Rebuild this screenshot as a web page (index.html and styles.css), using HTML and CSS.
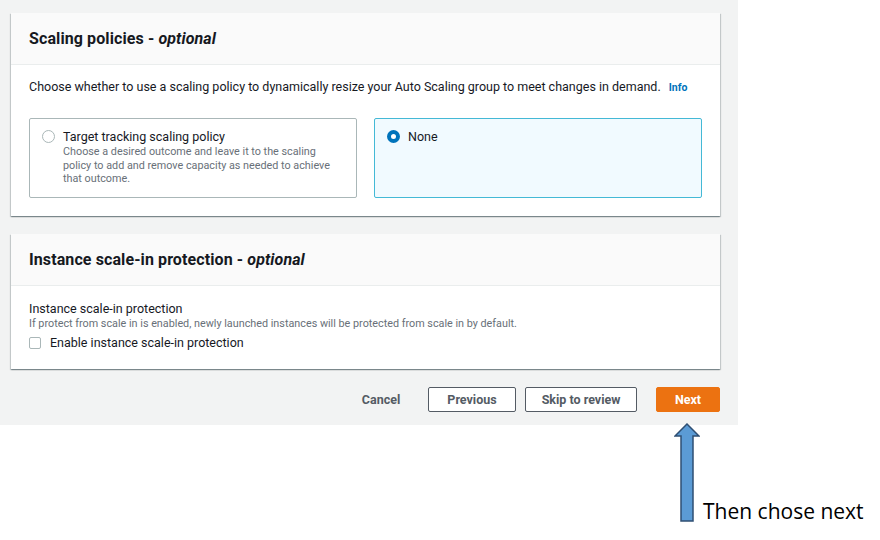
FILE: index.html
```html
<!DOCTYPE html>
<html>
<head>
<meta charset="utf-8">
<link rel="stylesheet" href="styles.css">
</head>
<body>
<div class="canvas">
  <div class="console">
    <section class="panel">
      <header class="panel-head"><h2>Scaling policies - <em>optional</em></h2></header>
      <div class="panel-body">
        <p class="lead">Choose whether to use a scaling policy to dynamically resize your Auto Scaling group to meet changes in demand. <a class="info">Info</a></p>
        <div class="tiles">
          <div class="tile">
            <span class="radio"></span>
            <div class="tile-text">
              <div class="tile-label">Target tracking scaling policy</div>
              <div class="tile-desc">Choose a desired outcome and leave it to the scaling policy to add and remove capacity as needed to achieve that outcome.</div>
            </div>
          </div>
          <div class="tile selected">
            <span class="radio on"></span>
            <div class="tile-text">
              <div class="tile-label">None</div>
            </div>
          </div>
        </div>
      </div>
    </section>
    <section class="panel second">
      <header class="panel-head"><h2>Instance scale-in protection - <em>optional</em></h2></header>
      <div class="panel-body body2">
        <div class="field-label">Instance scale-in protection</div>
        <div class="field-desc">If protect from scale in is enabled, newly launched instances will be protected from scale in by default.</div>
        <label class="check"><span class="box"></span>Enable instance scale-in protection</label>
      </div>
    </section>
    <div class="actions">
      <button class="link">Cancel</button>
      <button class="btn prev">Previous</button>
      <button class="btn skip">Skip to review</button>
      <button class="btn primary">Next</button>
    </div>
  </div>
  <div class="annot">
    <svg class="arrow" width="26" height="100" viewBox="0 0 26 100">
      <path d="M13 1 L25 13 L19 13 L19 98 L7 98 L7 13 L1 13 Z" fill="#5b9bd5" stroke="#2f4f73" stroke-width="1.5" stroke-linejoin="miter"/>
    </svg>
    <span class="note">Then chose next</span>
  </div>
</div>
</body>
</html>
```

FILE: styles.css
```css
* { box-sizing: border-box; }
html, body { margin: 0; padding: 0; background: #ffffff; }
body { width: 880px; height: 540px; overflow: hidden; font-family: Roboto, "Noto Sans", sans-serif; color: #16191f; }

.canvas { position: relative; width: 880px; height: 540px; }

.console {
  width: 738px;
  height: 425px;
  background: #f2f3f3;
  padding: 13px 18px 0 11px;
}

.panel {
  width: 709px;
  background: #ffffff;
  box-shadow: 0 1px 1px 0 rgba(0,28,36,0.3), 1px 1px 1px 0 rgba(0,28,36,0.15), -1px 1px 1px 0 rgba(0,28,36,0.15);
}
.panel.second { margin-top: 18px; }

.panel-head {
  height: 52px;
  background: #fafafa;
  border-bottom: 1px solid #eaeded;
  padding: 0 18px;
  display: flex;
  align-items: center;
}
.panel-head h2 {
  margin: 0;
  font-size: 16px;
  font-weight: 700;
  letter-spacing: 0.1px;
  color: #16191f;
}
.panel-head h2 em { font-style: italic; }

.panel-body { padding: 14px 18px 18px 18px; }

.lead {
  margin: 0;
  font-size: 12.5px;
  line-height: 16px;
  letter-spacing: 0;
  color: #16191f;
}
.info {
  margin-left: 5px;
  font-size: 10.5px;
  font-weight: 700;
  color: #0073bb;
}

.tiles {
  margin-top: 22px;
  display: grid;
  grid-template-columns: 328px 328px;
  gap: 17px;
}
.tile {
  height: 80px;
  border: 1px solid #aab7b8;
  border-radius: 2px;
  background: #ffffff;
  padding: 10px 12px;
  display: flex;
  align-items: flex-start;
  gap: 8px;
}
.tile.selected {
  background: #f1faff;
  border: 1px solid #44b9d6;
}
.radio {
  flex: none;
  width: 13px;
  height: 13px;
  border-radius: 50%;
  border: 1px solid #aab7b8;
  background: #ffffff;
  margin-top: 1px;
}
.radio.on {
  border: 4px solid #0073bb;
  background: #ffffff;
}
.tile-label {
  font-size: 12.5px;
  line-height: 16px;
  color: #16191f;
}
.tile-desc {
  font-size: 10.8px;
  line-height: 13.5px;
  color: #687078;
  width: 272px;
}

.body2 { padding: 15px 18px 18px 18px; }
.field-label {
  font-size: 12.5px;
  line-height: 16px;
  color: #16191f;
}
.field-desc {
  font-size: 10.8px;
  line-height: 13px;
  color: #687078;
}
.check {
  margin-top: 5px;
  display: flex;
  align-items: center;
  gap: 9px;
  font-size: 12.5px;
  line-height: 16px;
  color: #16191f;
}
.box {
  width: 12px;
  height: 12px;
  border: 1px solid #aab7b8;
  border-radius: 2px;
  background: #fff;
}

.actions {
  margin-top: 18px;
  width: 709px;
  display: flex;
  justify-content: flex-end;
  align-items: center;
  gap: 9px;
}
button {
  font-family: Roboto, "Noto Sans", sans-serif;
  font-weight: 700;
  font-size: 12.5px;
  height: 25px;
  padding: 0;
  cursor: pointer;
}
.link {
  border: none;
  background: transparent;
  color: #545b64;
  width: 40px;
  margin-right: 18px;
}
.btn {
  border: 1px solid #545b64;
  border-radius: 2px;
  background: #ffffff;
  color: #545b64;
}
.prev { width: 88px; }
.skip { width: 112px; }
.primary {
  width: 64px;
  margin-left: 10px;
  background: #ec7211;
  border-color: #ec7211;
  color: #ffffff;
}

.annot {
  position: absolute;
  left: 674px;
  top: 423px;
  display: flex;
  align-items: flex-end;
}
.arrow { display: block; }
.note {
  margin-left: 3px;
  font-family: "Open Sans", "Noto Sans", sans-serif;
  font-size: 21px;
  line-height: 24px;
  color: #000000;
}
```
